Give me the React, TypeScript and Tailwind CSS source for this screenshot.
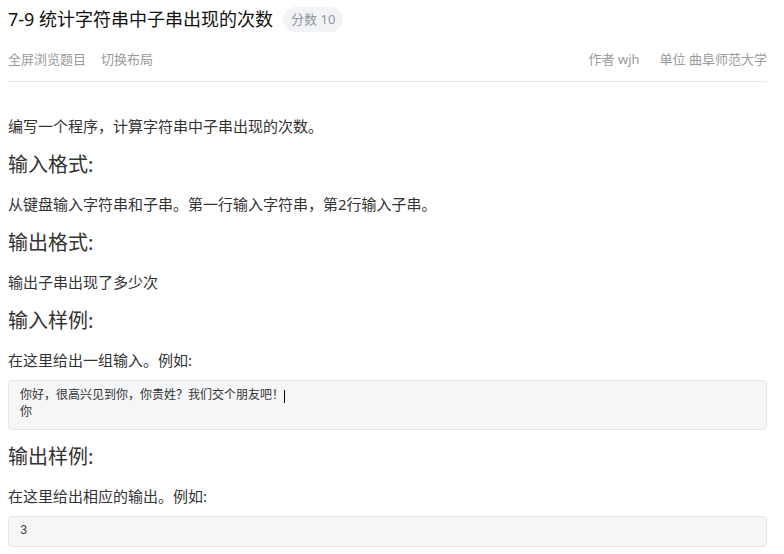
const font = { fontFamily: '"Noto Sans", "Noto Sans CJK SC", sans-serif' };

const Heading = ({ children }: { children: React.ReactNode }) => (
	<h3 className="text-[20px] leading-[28px] font-normal text-[#333]">{children}</h3>
);

const Para = ({ children }: { children: React.ReactNode }) => (
	<p className="text-[15px] leading-[24px] text-[#333]">{children}</p>
);

const CodeBox = ({ children }: { children: React.ReactNode }) => (
	<pre
		className="-mt-[5px] border border-[#e3e5e8] bg-[#f5f6f8] rounded-[4px] px-[11px] text-[12px] leading-[17px] text-[#333] whitespace-pre-wrap"
		style={{ fontFamily: '"Liberation Mono", "Noto Sans CJK SC", monospace' }}
	>
		{children}
	</pre>
);

export default function App() {
	return (
		<div className="w-[784px] h-[554px] overflow-hidden bg-white" style={font}>
			<div className="ml-2 w-[759px]">
				<div className="border-b border-[#e8e8e8] pt-[6px] pb-3">
					<div className="flex items-center gap-[10px] h-[26px]">
						<h1 className="text-[18px] leading-[26px] font-normal text-[#111]">7-9 统计字符串中子串出现的次数</h1>
						<span className="h-[25px] px-2 rounded-full bg-[#f2f3f5] text-[13px] leading-[25px] text-[#8f959e]">分数 10</span>
					</div>
					<div className="mt-[17px] flex justify-between text-[13px] leading-[20px] text-[#9a9a9a]">
						<div className="flex gap-[15px]">
							<span>全屏浏览题目</span>
							<span>切换布局</span>
						</div>
						<div className="flex gap-[20px]">
							<span>作者 wjh</span>
							<span>单位 曲阜师范大学</span>
						</div>
					</div>
				</div>

				<div className="pt-8 flex flex-col gap-[13px]">
					<Para>编写一个程序，计算字符串中子串出现的次数。</Para>
					<Heading>输入格式:</Heading>
					<Para>从键盘输入字符串和子串。第一行输入字符串，第2行输入子串。</Para>
					<Heading>输出格式:</Heading>
					<Para>输出子串出现了多少次</Para>
					<Heading>输入样例:</Heading>
					<Para>在这里给出一组输入。例如:</Para>
					<CodeBox>
						<div className="py-[7px]">
							<div className="flex items-center">
								你好，很高兴见到你，你贵姓？我们交个朋友吧！
								<span className="inline-block w-px h-[13px] bg-black" />
							</div>
							<div>你</div>
						</div>
					</CodeBox>
					<Heading>输出样例:</Heading>
					<Para>在这里给出相应的输出。例如:</Para>
					<CodeBox>
						<div className="py-[6px]">3</div>
					</CodeBox>
				</div>
			</div>
		</div>
	);
}
